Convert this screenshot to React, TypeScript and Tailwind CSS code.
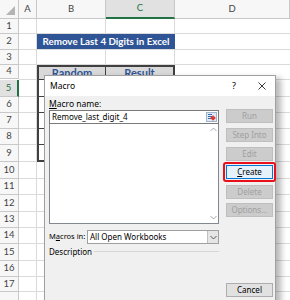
import React from "react";

const rowHeights = [15, 16, 15, 14, 17, 16, 16, 16, 17, 17, 16, 17, 16, 16, 17, 16, 15, 20];

function Chevron({ dir }: { dir: "up" | "down" }) {
  return (
    <svg width="7" height="5" viewBox="0 0 7 5">
      <path
        d={dir === "up" ? "M0.5 4 L3.5 1 L6.5 4" : "M0.5 1 L3.5 4 L6.5 1"}
        fill="none"
        stroke="#a6a6a6"
        strokeWidth="1"
      />
    </svg>
  );
}

function Btn({ label, u, enabled, primary }: { label: string; u?: number; enabled?: boolean; primary?: boolean }) {
  const text =
    u === undefined ? (
      label
    ) : (
      <>
        {label.slice(0, u)}
        <span className="underline">{label[u]}</span>
        {label.slice(u + 1)}
      </>
    );
  return (
    <div
      className={
        primary
          ? "h-[14px] w-[47px] flex items-center justify-center border border-[#0078d7] bg-[#e5f1fb] text-[8px] text-[#000]"
          : enabled
          ? "h-[14px] w-[47px] flex items-center justify-center border border-[#adadad] bg-[#e1e1e1] text-[8px] text-[#000]"
          : "h-[14px] w-[47px] flex items-center justify-center border border-[#bfbfbf] bg-[#cccccc] text-[8px] text-[#a0a0a0]"
      }
    >
      {text}
    </div>
  );
}

export default function App() {
  const cols = ["A", "B", "C", "D"];
  return (
    <div className="relative w-[290px] h-[300px] overflow-hidden bg-white" style={{ fontFamily: "Lato, 'Liberation Sans', sans-serif" }}>
      {/* Spreadsheet grid */}
      <div className="grid grid-cols-[19px_18px_69px_69px_1fr]">
        <div className="h-[19px] bg-[#f7f7f7] border-r border-b border-[#c8c8c8] flex items-end justify-end p-[3px]">
          <svg width="9" height="9" viewBox="0 0 9 9">
            <path d="M9 0 L9 9 L0 9 Z" fill="#b4b4b4" />
          </svg>
        </div>
        {cols.map((c) => (
          <div
            key={c}
            className={
              c === "C"
                ? "h-[19px] bg-[#e1e1e1] border-r border-[#c8c8c8] border-b-2 border-b-[#217346] flex items-center justify-center text-[9.5px] text-[#217346]"
                : "h-[19px] bg-[#f7f7f7] border-r border-b border-[#c8c8c8] flex items-center justify-center text-[9.5px] text-[#444]"
            }
          >
            {c}
          </div>
        ))}
        {rowHeights.map((h, i) => {
          const r = i + 1;
          return (
            <React.Fragment key={r}>
              <div
                style={{ height: h }}
                className={
                  r === 5
                    ? "bg-[#e1e1e1] border-b border-[#c8c8c8] border-r-2 border-r-[#217346] flex items-center justify-center text-[9.5px] text-[#217346]"
                    : "bg-[#f7f7f7] border-r border-b border-[#c8c8c8] flex items-center justify-center text-[9.5px] text-[#444]"
                }
              >
                {r <= 17 ? r : ""}
              </div>
              <div className="border-r border-b border-[#dadada]" />
              {r === 2 ? (
                <div className="col-span-2 bg-[#2f5597] border-b border-[#dadada] flex items-center justify-center text-white font-bold text-[9.8px] whitespace-nowrap">
                  Remove Last 4 Digits in Excel
                </div>
              ) : r === 4 ? (
                <>
                  <div className="bg-[#d9d9d9] border-l-2 border-t-2 border-r border-b border-[#404040] flex items-start justify-center text-[11px] font-bold text-[#2f5597] leading-[12px] overflow-hidden">
                    Random
                  </div>
                  <div className="bg-[#d9d9d9] border-t-2 border-r-2 border-b border-[#404040] flex items-start justify-center text-[11px] font-bold text-[#2f5597] leading-[12px] overflow-hidden">
                    Result
                  </div>
                </>
              ) : r >= 5 && r <= 9 ? (
                <>
                  <div className={r === 9 ? "border-l-2 border-r border-b-2 border-[#404040]" : "border-l-2 border-r border-b border-[#404040]"} />
                  <div className={r === 9 ? "border-r-2 border-b-2 border-[#404040]" : "border-r-2 border-b border-[#404040]"} />
                </>
              ) : (
                <>
                  <div className="border-r border-b border-[#dadada]" />
                  <div className="border-r border-b border-[#dadada]" />
                </>
              )}
              <div className="border-b border-[#dadada]" />
            </React.Fragment>
          );
        })}
      </div>

      {/* Macro dialog */}
      <div
        className="absolute left-[44px] top-[75px] w-[232px] h-[240px] border border-[#a0a0a0] bg-[#f0f0f0] shadow-[5px_3px_6px_rgba(0,0,0,0.28)] flex flex-col"
        style={{ fontFamily: "'Noto Sans', 'Open Sans', sans-serif" }}
      >
        <div className="h-[20px] bg-white flex items-center pl-[5px] pr-[9px] text-[8.5px] text-[#000]">
          <span className="flex-1">Macro</span>
          <span className="mr-[22px] text-[9px]">?</span>
          <svg width="8" height="8" viewBox="0 0 8 8">
            <path d="M0.5 0.5 L7.5 7.5 M7.5 0.5 L0.5 7.5" stroke="#222" strokeWidth="0.9" />
          </svg>
        </div>
        <div className="flex flex-1 pl-[4px]">
          <div className="w-[170px] flex flex-col">
            <div className="h-[13px] mt-[1px] text-[8.5px] leading-[13px] text-[#000]">
              <span className="underline">M</span>acro name:
            </div>
            <div className="h-[14px] bg-white border border-[#7a7a7a] flex items-center pl-[2px] text-[8px] text-[#000]">
              <span className="flex-1">Remove_last_digit_4</span>
              <div className="w-[11px] h-[10px] mr-[1px] bg-[#dfe8f3] border border-[#9fb3cc] relative">
                <div className="absolute left-[1px] top-[1px] w-[4px] h-[1px] bg-[#3a6fb0]" />
                <div className="absolute left-[1px] top-[3px] w-[4px] h-[1px] bg-[#3a6fb0]" />
                <div className="absolute left-[1px] top-[5px] w-[6px] h-[1px] bg-[#3a6fb0]" />
                <div className="absolute right-[1px] top-[3px] w-[4px] h-[4px] bg-[#e03a2f] rotate-45" />
              </div>
            </div>
            <div className="h-[100px] bg-white border border-t-0 border-[#828790] flex justify-end">
              <div className="w-[10px] flex flex-col items-center justify-between py-[3px]">
                <Chevron dir="up" />
                <Chevron dir="down" />
              </div>
            </div>
            <div className="mt-[6px] flex items-center h-[14px]">
              <div className="w-[38px] whitespace-nowrap text-[7.5px] text-[#000]">
                M<span className="underline">a</span>cros in:
              </div>
              <div className="flex-1 h-[14px] bg-white border border-[#a0a0a0] flex items-center pl-[2px] text-[8px] text-[#000]">
                <span className="flex-1">All Open Workbooks</span>
                <div className="w-[11px] h-[12px] bg-[#e5e5e5] border-l border-[#c0c0c0] flex items-center justify-center">
                  <svg width="7" height="5" viewBox="0 0 7 5">
                    <path d="M0.5 1 L3.5 4 L6.5 1" fill="none" stroke="#555" strokeWidth="1" />
                  </svg>
                </div>
              </div>
            </div>
            <div className="mt-[2px] flex items-center h-[11px]">
              <span className="text-[8px] text-[#000]">Description</span>
              <div className="flex-1 ml-[2px] h-px bg-[#d7d7d7]" />
            </div>
          </div>
          <div className="ml-[7px] flex flex-col pt-[13px]">
            <Btn label="Run" />
            <div className="mt-[5px]"><Btn label="Step Into" /></div>
            <div className="mt-[5px]"><Btn label="Edit" /></div>
            <div className="mt-[4px] relative">
              <div className="absolute left-[-3px] top-[-3px] w-[53px] h-[20px] rounded-[3px] border-2 border-[#e8101a]" />
              <Btn label="Create" u={0} enabled primary />
            </div>
            <div className="mt-[6px]"><Btn label="Delete" /></div>
            <div className="mt-[4px]"><Btn label="Options..." /></div>
            <div className="mt-[66px]"><Btn label="Cancel" enabled /></div>
          </div>
        </div>
      </div>
    </div>
  );
}
